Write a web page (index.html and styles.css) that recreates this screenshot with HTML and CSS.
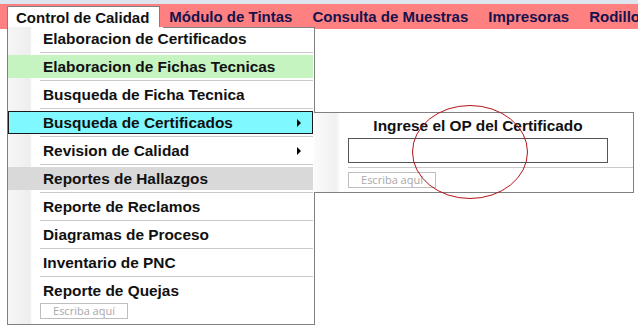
FILE: index.html
```html
<!DOCTYPE html>
<html lang="es">
<head>
    <meta charset="UTF-8">
    <title>Control de Calidad</title>
    <link rel="stylesheet" href="styles.css">
</head>
<body>
    <div class="top-strip"></div>
    <nav class="menubar">
        <a class="tab open" href="#">Control de Calidad</a>
        <a class="tab" href="#">Módulo de Tintas</a>
        <a class="tab" href="#">Consulta de Muestras</a>
        <a class="tab" href="#">Impresoras</a>
        <a class="tab" href="#">Rodillos</a>
    </nav>

    <!-- dropdown of Control de Calidad -->
    <div class="dropdown">
        <div class="item first"><span class="label">Elaboracion de Certificados</span></div>
        <div class="item"><span class="label green">Elaboracion de Fichas Tecnicas</span></div>
        <div class="item"><span class="label">Busqueda de Ficha Tecnica</span></div>
        <div class="item"><span class="label active">Busqueda de Certificados<i class="arrow"></i></span></div>
        <div class="item"><span class="label">Revision de Calidad<i class="arrow"></i></span></div>
        <div class="item"><span class="label grey">Reportes de Hallazgos</span></div>
        <div class="item"><span class="label">Reporte de Reclamos</span></div>
        <div class="item"><span class="label">Diagramas de Proceso</span></div>
        <div class="item"><span class="label">Inventario de PNC</span></div>
        <div class="item last"><span class="label">Reporte de Quejas</span></div>
        <div class="type-here">Escriba aquí</div>
    </div>

    <!-- submenu of Busqueda de Certificados -->
    <div class="submenu">
        <div class="sub-title">Ingrese el OP del Certificado</div>
        <div class="sub-input"></div>
        <div class="sub-sep"></div>
        <div class="type-here">Escriba aquí</div>
    </div>

    <svg class="mark" width="120" height="96" viewBox="0 0 120 96">
        <ellipse cx="60" cy="48" rx="57.5" ry="46.5" fill="none" stroke="#b3121a" stroke-width="1"/>
    </svg>
</body>
</html>
```

FILE: styles.css
```css
body {
    margin: 0;
    background: #fff;
    font-family: "Liberation Sans", Arial, sans-serif;
    color: #111;
    overflow: hidden;
}
.top-strip {
    height: 4px;
    background: #dfe5ee;
}
.menubar {
    display: flex;
    height: 25px;
    background: #ff8080;
    padding-left: 7px;
    overflow: hidden;
}
.tab {
    display: block;
    flex-shrink: 0;
    white-space: nowrap;
    padding: 0 11px 0 9px;
    line-height: 25px;
    font-size: 15px;
    font-weight: bold;
    color: #16124e;
    text-decoration: none;
}
.tab.open {
    margin-top: 2px;
    padding: 0 10px 0 8px;
    line-height: 21px;
    background: #fff;
    border: 1px solid #808080;
    border-bottom: none;
    color: #111;
}

.dropdown {
    position: absolute;
    left: 7px;
    top: 27px;
    width: 306px;
    height: 297px;
    border: 1px solid #808080;
    border-top: none;
    background: linear-gradient(to right, #f6f6f6 0, #eeeeee 22px, #fff 24px);
}
.dropdown::before {
    content: "";
    position: absolute;
    left: 155px;
    right: 0;
    top: 0;
    border-top: 1px solid #808080;
}
.item {
    height: 28px;
    padding: 2px 1px 0 0;
    box-sizing: border-box;
    background: linear-gradient(#c9c9c9, #c9c9c9) no-repeat 32px 100% / calc(100% - 33px) 1px;
}
.item.first {
    height: 26px;
    padding-top: 0;
}
.item.last {
    height: 25px;
    background: none;
}
.label {
    display: flex;
    align-items: center;
    position: relative;
    height: 21px;
    padding-left: 34px;
    font-size: 15.4px;
    font-weight: bold;
    white-space: nowrap;
    border: 1px solid transparent;
}
.label.green {
    background: #c6f4c0;
}
.label.grey {
    background: #d9d9d9;
}
.label.active {
    background: #80f8ff;
    border-color: #1a1a1a;
}
.arrow {
    position: absolute;
    right: 11px;
    top: 7px;
    border-left: 4px solid #000;
    border-top: 4px solid transparent;
    border-bottom: 4px solid transparent;
}
.type-here {
    width: 86px;
    height: 14px;
    margin: 1px 0 0 32px;
    border: 1px solid #bdbdbd;
    font-family: "Open Sans", sans-serif;
    font-size: 11px;
    line-height: 14px;
    color: #a8a8a8;
    text-align: center;
}

.submenu {
    position: absolute;
    left: 314px;
    top: 112px;
    width: 319px;
    height: 79px;
    border: 1px solid #808080;
    border-left: none;
    background: linear-gradient(to right, #fbfbfb 0, #f0f0f0 22px, #fff 26px);
}
.sub-title {
    width: 260px;
    margin-left: 34px;
    height: 25px;
    line-height: 25px;
    text-align: center;
    font-size: 15.4px;
    font-weight: bold;
    white-space: nowrap;
}
.sub-input {
    width: 258px;
    height: 23px;
    margin-left: 34px;
    border: 1px solid #555;
    background: #fff;
}
.sub-sep {
    margin: 4px 0 0 34px;
    border-top: 1px solid #c9c9c9;
}
.submenu .type-here {
    margin: 4px 0 0 34px;
}

.mark {
    position: absolute;
    left: 410px;
    top: 104px;
}
```
